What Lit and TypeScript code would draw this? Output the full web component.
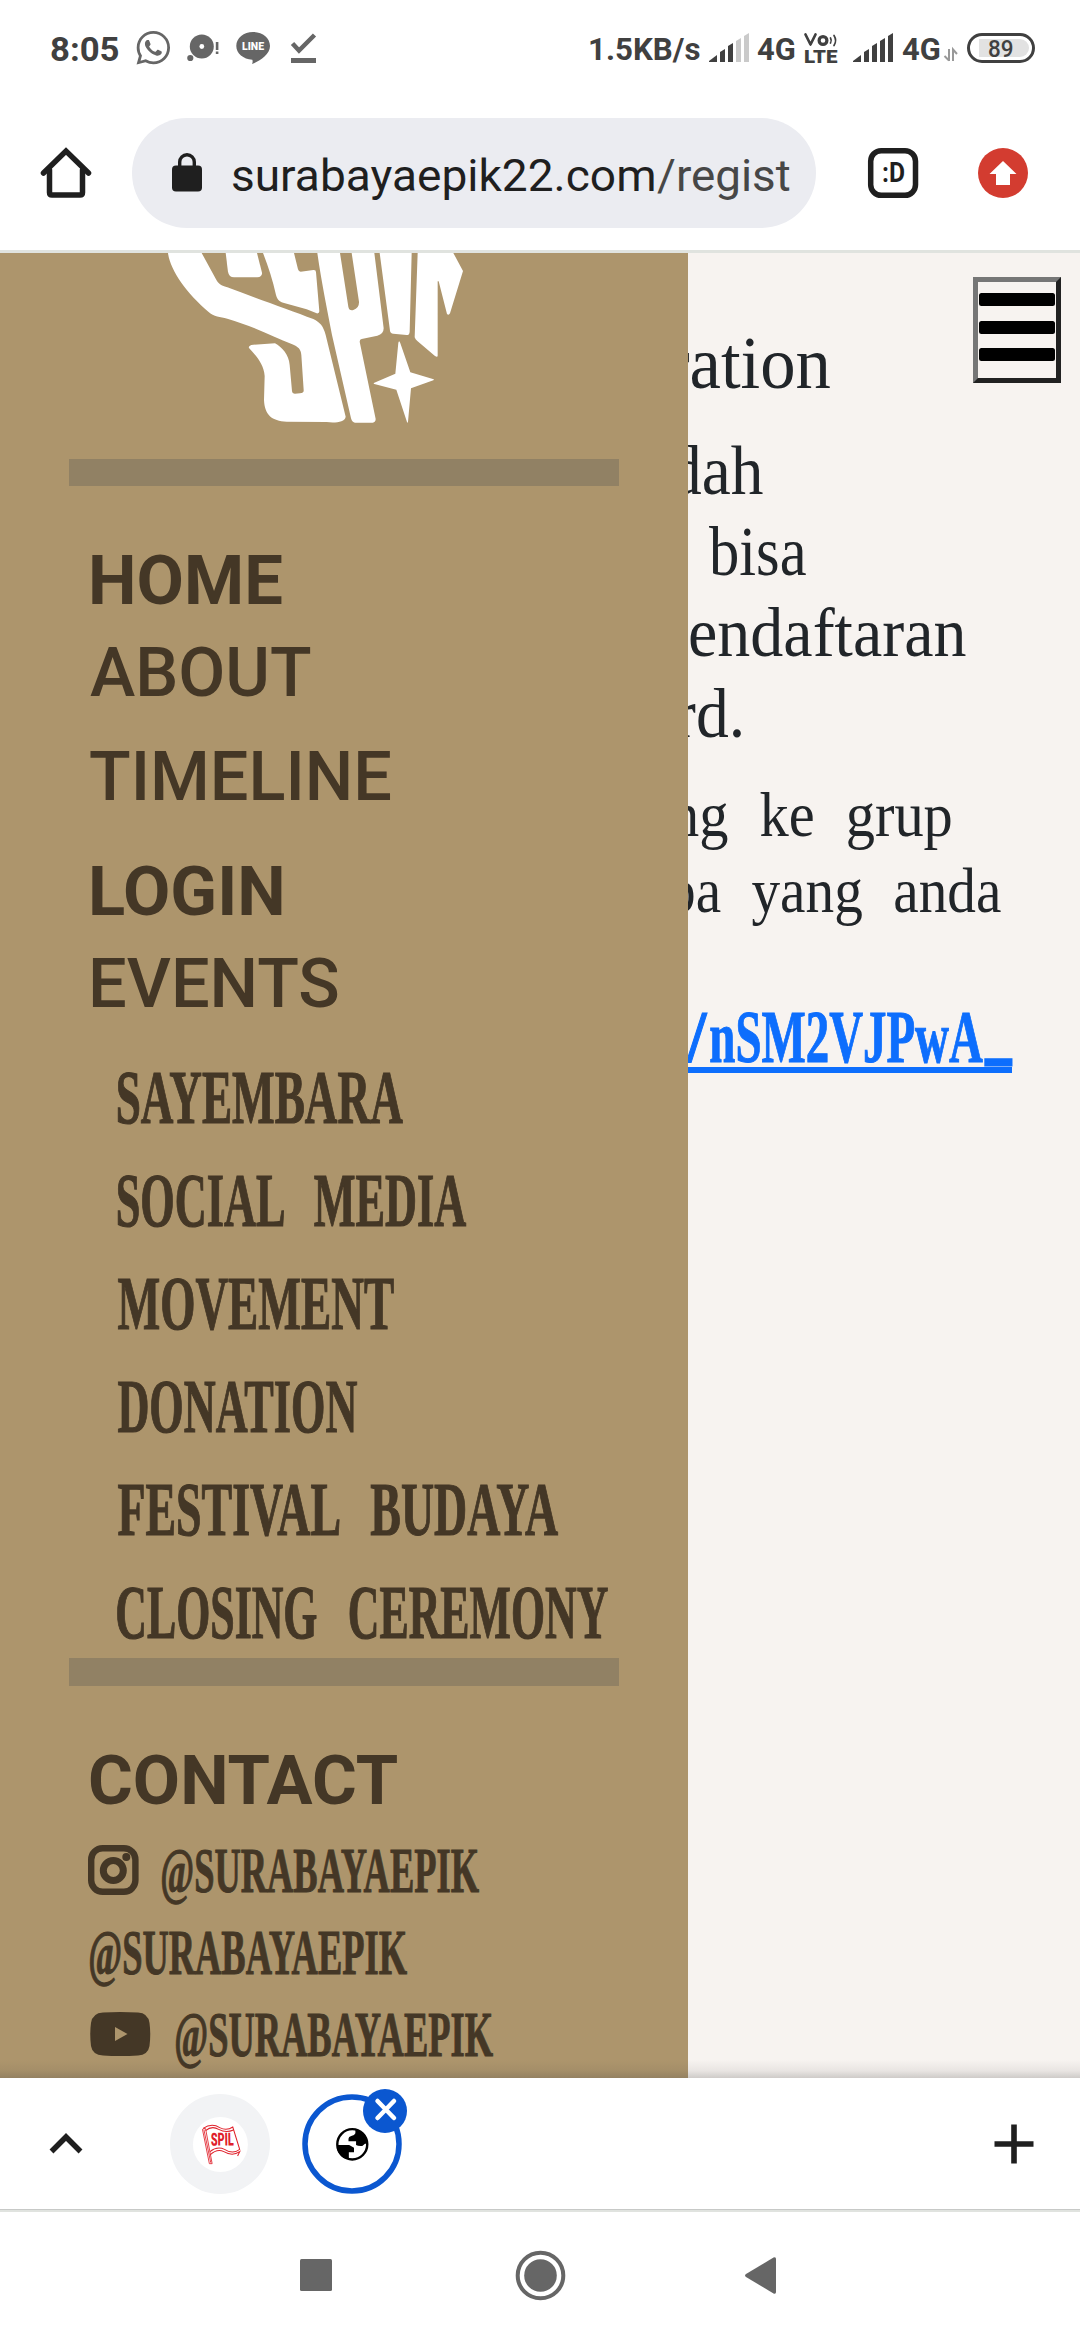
import { LitElement, html, css, svg } from "lit";
import { customElement, property, query } from "lit/decorators.js";
import { styleMap } from "lit/directives/style-map.js";

/** Single line of text whose inked width is stretched to a given number of pixels. */
@customElement("fit-text")
class FitText extends LitElement {
  @property() text = "";
  @property({ type: Number }) width = 0;
  @query("span") span!: HTMLSpanElement;

  static styles = css`
    :host {
      display: block;
      flex: none;
      white-space: nowrap;
    }
    span {
      display: inline-block;
      transform-origin: 0 50%;
      white-space: pre;
      vertical-align: top;
    }
  `;

  updated() {
    const cs = getComputedStyle(this);
    const ctx = document.createElement("canvas").getContext("2d") as any;
    ctx.font = `${cs.fontWeight} ${cs.fontSize} ${cs.fontFamily}`;
    ctx.wordSpacing = cs.wordSpacing;
    const m = ctx.measureText(this.text);
    const left = -m.actualBoundingBoxLeft;
    const scale = this.width / (m.actualBoundingBoxRight - left);
    this.style.width = `${this.width}px`;
    this.span.style.transform = `translateX(${-left * scale}px) scaleX(${scale})`;
  }

  render() {
    return html`<span>${this.text}</span>`;
  }
}

const signal = (x: number, lit: number) =>
  [55, 49, 43, 38, 33].map((top, i) => {
    const l = x + i * 8 - (i ? -3 : 0);
    const w = i ? 5 : 8;
    const drop = i ? 3 : 6;
    return svg`<path fill=${i < lit ? "#404040" : "#cacaca"}
      d="M${l} ${top + drop}L${l + w} ${top}V62H${l}Z"/>`;
  });

const sub: [string, number, number][] = [
  ["SAYEMBARA", 118, 285],
  ["SOCIAL MEDIA", 118, 351],
  ["MOVEMENT", 118, 276],
  ["DONATION", 118, 239],
  ["FESTIVAL BUDAYA", 118, 443],
  ["CLOSING CEREMONY", 117, 491],
];

const lines: [string, string, number, number][] = [
  ["title", "ration", 667, 163],
  ["big", "dah", 671, 92],
  ["big", "bisa", 709, 97],
  ["big", "endaftaran", 690, 276],
  ["big", "rd.", 675, 66],
  ["small first", "ng ke grup", 671, 280],
  ["small", "ba yang anda", 667, 334],
];

@customElement("app-root")
class AppRoot extends LitElement {
  static styles = css`
    :host {
      display: flex;
      flex-direction: column;
      width: 1080px;
      height: 2340px;
      overflow: hidden;
      background: #fff;
      font-family: Roboto, "Liberation Sans", sans-serif;
    }
    svg {
      display: block;
      flex: none;
    }
    .status {
      display: flex;
      height: 98px;
      padding-left: 51px;
      color: #404040;
      line-height: 98px;
      font-weight: 700;
      font-size: 32px;
    }
    .clock {
      font-size: 34px;
      margin-right: 11px;
    }
    .speed {
      margin-left: 270px;
    }
    .toolbar {
      display: flex;
      height: 152px;
      border-bottom: 3px solid #e0e3df;
    }
    .pill {
      display: flex;
      box-sizing: border-box;
      width: 684px;
      height: 110px;
      margin-top: 20px;
      border-radius: 55px;
      background: #ebecf1;
      font-size: 45px;
      line-height: 115px;
      color: #1f1f1f;
    }
    .path {
      margin-left: 3px;
      color: #474747;
    }
    .content {
      position: relative;
      display: flex;
      height: 1825px;
      background: #f7f3f0;
      overflow: hidden;
    }
    .content::after {
      content: "";
      position: absolute;
      left: 0;
      right: 0;
      bottom: 0;
      height: 18px;
      background: linear-gradient(rgba(60, 60, 60, 0), rgba(60, 60, 60, 0.08) 60%, rgba(60, 60, 60, 0.22));
    }
    .side {
      flex: none;
      width: 688px;
      height: 1825px;
      background: #ad956c;
      color: #443726;
      overflow: hidden;
    }
    .logo {
      margin-left: 140px;
    }
    .rule {
      width: 550px;
      height: 27px;
      margin: 34px 0 0 69px;
      background: #918164;
    }
    .rule.second {
      height: 28px;
      margin-top: -6px;
    }
    .item {
      margin-left: 92px;
      font-size: 69px;
      line-height: 92px;
      height: 92px;
      font-weight: 500;
    }
    .bold {
      font-weight: 700;
    }
    .gap49 {
      margin-top: 49px;
    }
    .gap12 {
      margin-top: 12px;
    }
    .gap23 {
      margin-top: 23px;
    }
    .wide {
      margin-left: 89.5px;
    }
    .sub {
      margin-top: 16px;
      font: 700 77px/103px "Liberation Serif", serif;
      word-spacing: 34px;
      -webkit-text-stroke: 1.2px #443726;
    }
    .handles {
      margin-top: 3px;
      font: 700 63px/82px "Liberation Serif", serif;
      -webkit-text-stroke: 1px #443726;
    }
    .row {
      display: flex;
      height: 82px;
    }
    .plain {
      padding-left: 90px;
    }
    .main {
      flex: 1;
      min-width: 0;
      padding-top: 70px;
      overflow: hidden;
      color: #212529;
      font-family: "Liberation Serif", serif;
    }
    .title {
      font-size: 74px;
      line-height: 80px;
      margin-bottom: 28px;
    }
    .big {
      font-size: 69px;
      line-height: 81px;
    }
    .small {
      font-size: 64px;
      line-height: 76px;
      word-spacing: 18px;
    }
    .first {
      margin-top: 22px;
    }
    .link {
      display: flex;
      box-sizing: border-box;
      height: 75px;
      width: 324px;
      margin-top: 69px;
      border-bottom: 6px solid #0d6efd;
      color: #0d6efd;
      font-weight: 700;
      font-size: 73px;
      line-height: 80px;
      -webkit-text-stroke: 1px #0d6efd;
    }
    .slash {
      margin-left: -2px;
    }
    .code {
      margin-left: 2px;
    }
    .under {
      margin: -7px 0 0 2px;
      -webkit-text-stroke-width: 3px;
    }
    .burger {
      position: absolute;
      top: 24px;
      left: 973px;
      display: flex;
      flex-direction: column;
      box-sizing: border-box;
      width: 88px;
      height: 106px;
      padding: 11px 1px 0;
      gap: 14.5px;
      border: 5px solid;
      border-color: #767676 #212121 #212121 #767676;
      z-index: 1;
    }
    .bar {
      height: 13px;
      border-radius: 2.5px;
      background: #000;
    }
    .tabs {
      height: 132px;
      border-bottom: 2px solid #e0e3df;
      box-shadow: inset 0 -1px #c7c9c7;
    }
  `;

  private item(text: string, width: number, cls: string) {
    return html`<fit-text class="item ${cls}" .text=${text} .width=${width}></fit-text>`;
  }

  render() {
    return html`
      <div class="status">
        <fit-text class="clock" .text=${"8:05"} .width=${68}></fit-text>
        <svg width="190" height="98" viewBox="130 0 190 98" fill="#666">
          <path transform="translate(136.5 31) scale(1.4)" d="M17.472 14.382c-.297-.149-1.758-.867-2.03-.967-.273-.099-.471-.148-.67.15-.197.297-.767.966-.94 1.164-.173.199-.347.223-.644.075-.297-.15-1.255-.463-2.39-1.475-.883-.788-1.48-1.761-1.653-2.059-.173-.297-.018-.458.13-.606.134-.133.298-.347.446-.52.149-.174.198-.298.298-.497.099-.198.05-.371-.025-.52-.075-.149-.669-1.612-.916-2.207-.242-.579-.487-.5-.669-.51-.173-.008-.371-.01-.57-.01-.198 0-.52.074-.792.372-.272.297-1.04 1.016-1.04 2.479 0 1.462 1.065 2.875 1.213 3.074.149.198 2.096 3.2 5.077 4.487.709.306 1.262.489 1.694.625.712.227 1.36.195 1.871.118.571-.085 1.758-.719 2.006-1.413.248-.694.248-1.289.173-1.413-.074-.124-.272-.198-.57-.347m-5.421 7.403h-.004a9.87 9.87 0 01-5.031-1.378l-.361-.214-3.741.982.998-3.648-.235-.374a9.86 9.86 0 01-1.51-5.26c.001-5.45 4.436-9.884 9.888-9.884 2.64 0 5.122 1.03 6.988 2.898a9.825 9.825 0 012.893 6.994c-.003 5.45-4.437 9.884-9.885 9.884m8.413-18.297A11.815 11.815 0 0012.05 0C5.495 0 .16 5.335.157 11.892c0 2.096.547 4.142 1.588 5.945L.057 24l6.305-1.654a11.882 11.882 0 005.683 1.448h.005c6.554 0 11.89-5.335 11.893-11.893a11.821 11.821 0 00-3.48-8.413z"/>
          <circle cx="201.8" cy="46.5" r="12"/>
          <circle cx="201.8" cy="46.5" r="2.4" fill="#fff"/>
          <circle cx="190.3" cy="58" r="3.1"/>
          <path d="M215.8 42h2.6v8h-2.6zM215.8 51.5h2.6v2.6h-2.6z"/>
          <path d="M253 32c9.500 0 17 6 17 14 0 4-2 7-5.500 10.500-3.500 3-8 6-12.500 7.500 .8-1.500 .8-3 .3-4.200-9-.6-16-6.500-16-13.800 0-8 7.500-14 16.700-14z"/>
          <text x="242" y="50" font-size="11" font-weight="900" fill="#fff" textLength="22" lengthAdjust="spacingAndGlyphs">LINE</text>
          <path d="M292.500 43.500l6.500 7 15.500-15.500" fill="none" stroke="#666" stroke-width="4.500"/>
          <path d="M291 58h25v5h-25z"/>
        </svg>
        <fit-text class="speed" .text=${"1.5KB/s"} .width=${110}></fit-text>
        <svg width="57" height="98" viewBox="700 0 57 98">${signal(709, 3)}</svg>
        <fit-text .text=${"4G"} .width=${38}></fit-text>
        <svg width="107" height="98" viewBox="795 0 107 98" fill="#404040">
          <g fill="none" stroke="#404040" stroke-width="2.700" stroke-linecap="round" stroke-linejoin="round">
            <path d="M805.500 34.500l5 10 5-10"/>
            <circle cx="823" cy="40.500" r="3.900" stroke-width="3.200"/>
            <path d="M830.500 38q1.500 2.500 0 5M834 35.500q3.200 5 0 10" stroke-width="1.700"/>
          </g>
          <text x="804" y="63" font-size="18" font-weight="900" textLength="33.500" lengthAdjust="spacingAndGlyphs">LTE</text>
          ${signal(853, 5)}
        </svg>
        <fit-text .text=${"4G"} .width=${38}></fit-text>
        <svg width="140" height="98" viewBox="940 0 140 98">
          <path d="M949 49v12M944.500 56l4.500 4.500M953 61V49.500l4 4.500" fill="none" stroke="#999" stroke-width="2"/>
          <rect x="968.500" y="34.500" width="65" height="27" rx="13.500" fill="none" stroke="#404040" stroke-width="3"/>
          <path d="M979 39h41a9 9 0 0 1 0 18h-41z" fill="#e2e2e2"/>
          <text x="988" y="56.500" font-size="23.500" font-weight="500" fill="#404040" textLength="25.500" lengthAdjust="spacingAndGlyphs">89</text>
        </svg>
      </div>

      <div class="toolbar">
        <svg width="132" height="152" viewBox="0 98 132 152" fill="none" stroke="#1f1f1f" stroke-width="5.500" stroke-linecap="round" stroke-linejoin="round">
          <path d="M43.500 173L66 151l22.500 22" stroke-linejoin="miter"/>
          <path d="M49.500 170v22.500q0 2.500 2.500 2.500h28q2.500 0 2.500-2.500V170"/>
        </svg>
        <div class="pill">
          <svg width="101" height="110" viewBox="132 118 101 110">
            <rect x="172" y="165.500" width="30" height="26" rx="4" fill="#1f1f1f"/>
            <path d="M179.700 167v-5a7.300 7.300 0 0 1 14.600 0v5" fill="none" stroke="#1f1f1f" stroke-width="3.400"/>
          </svg>
          <fit-text .text=${"surabayaepik22.com"} .width=${421}></fit-text>
          <fit-text class="path" .text=${"/regist"} .width=${133}></fit-text>
        </div>
        <svg width="264" height="152" viewBox="816 98 264 152">
          <rect x="870.700" y="150.700" width="44.800" height="44.600" rx="10.500" fill="none" stroke="#1f1f1f" stroke-width="5.500"/>
          <text x="882" y="181.500" font-size="27" font-weight="700" fill="#1f1f1f" textLength="23" lengthAdjust="spacingAndGlyphs">:D</text>
          <circle cx="1003" cy="173" r="25" fill="#d33c30"/>
          <path d="M1003 161l13.500 13h-6.500v11h-14v-11h-6.500z" fill="#fff"/>
        </svg>
      </div>

      <div class="content">
        <div class="side">
          <svg class="logo" width="360" height="172" viewBox="0 39 1080 516" fill="#fff">
            <path d="M84 39C90 90 140 160 205 215C222 230 240 230 262 236C330 255 400 290 455 312C475 320 483 328 484 345L491 450Q492 459 480 460L465 461Q457 461 456 453L449 375C447 345 425 320 405 310L340 314Q324 316 327 324C350 348 372 375 374 408L372 480C374 525 395 543 440 545L560 546C585 550 615 546 617 530L557 285C550 258 540 247 520 237C450 210 350 175 262 142C240 137 235 130 228 118L185 39Z"/>
            <path d="M257 39L264 95Q267 112 282 112L352 112Q367 110 366 98L351 39Z"/>
            <path d="M369 39C385 80 398 120 408 165C413 182 420 186 435 190L500 208L530 220Q538 221 538 214L528 97Q528 89 520 90L482 95Q476 95 474 88L462 39Z"/>
            <path d="M532 39C545 130 560 200 576 285L633 535Q637 548 645 548L698 548Q707 547 707 537L659 305Q659 298 665 297L712 287Q731 282 731 265L703 39H635L657 185Q658 205 640 210Q627 213 625 200L600 39Z"/>
            <path d="M719 39L750 272Q751 280 760 281L800 285Q808 286 809 275L815 39Z"/>
            <path d="M833 39L824 292Q826 298 832 303L884 347Q892 353 893 348V124H896L921 222Q926 227 930 220L969 93L940 39Z"/>
            <path d="M777 304Q779 304 781 310L811 397L881 418Q883 420 880 421L813 445L804 545Q802 552 800 543L769 449L703 432Q698 430 703 428L766 401L775 308Z"/>
          </svg>
          <div class="rule"></div>
          ${this.item("HOME", 190, "bold gap49")}
          ${this.item("ABOUT", 220.5, "wide")}
          ${this.item("TIMELINE", 301, "wide gap12")}
          ${this.item("LOGIN", 190, "bold gap23")}
          ${this.item("EVENTS", 246, "")}
          <div class="sub">
            ${sub.map(([t, x, w]) => html`<fit-text .text=${t} .width=${w} style=${styleMap({ marginLeft: `${x}px` })}></fit-text>`)}
          </div>
          <div class="rule second"></div>
          ${this.item("CONTACT", 307.5, "bold wide gap49")}
          <div class="handles">
            <div class="row">
              <svg width="162" height="82" viewBox="0 1830 162 82" fill="none" stroke="#443726">
                <rect x="91.200" y="1848.200" width="44.200" height="43.600" rx="11.500" stroke-width="6.400"/>
                <circle cx="113.300" cy="1870.500" r="10" stroke-width="7"/>
                <circle cx="126.300" cy="1857" r="4" fill="#443726" stroke="none"/>
              </svg>
              <fit-text .text=${"@SURABAYAEPIK"} .width=${317}></fit-text>
            </div>
            <div class="row plain">
              <fit-text .text=${"@SURABAYAEPIK"} .width=${317}></fit-text>
            </div>
            <div class="row">
              <svg width="176" height="82" viewBox="0 1994 176 82">
                <path d="M103 2012.500Q120 2011.500 138 2012.500Q148 2013 149.500 2023Q151 2034 149.500 2046Q148 2055 138 2055.500Q120 2056.500 103 2055.500Q92.500 2055 91 2046Q89.500 2034 91 2023Q92.500 2013 103 2012.500Z" fill="#443726"/>
                <path d="M115 2027v14l12.500-7z" fill="#ad956c"/>
              </svg>
              <fit-text .text=${"@SURABAYAEPIK"} .width=${317}></fit-text>
            </div>
          </div>
        </div>
        <div class="main">
          ${lines.map(([c, t, x, w]) => html`<fit-text class=${c} .text=${t} .width=${w} style=${styleMap({ marginLeft: `${x - 688}px` })}></fit-text>`)}
          <a class="link">
            <fit-text class="slash" .text=${"/"} .width=${22}></fit-text>
            <fit-text class="code" .text=${"nSM2VJPwA"} .width=${273}></fit-text>
            <fit-text class="under" .text=${"_"} .width=${27}></fit-text>
          </a>
        </div>
        <div class="burger">
          <div class="bar"></div>
          <div class="bar"></div>
          <div class="bar"></div>
        </div>
      </div>

      <div class="tabs">
        <svg width="1080" height="131" viewBox="0 2078 1080 131">
          <path d="M51.500 2151.500L66 2137l14.500 14.500" fill="none" stroke="#1f1f1f" stroke-width="5.500"/>
          <circle cx="220" cy="2144" r="50" fill="#f2f3f5"/>
          <circle cx="220.400" cy="2144.500" r="27.500" fill="#fff"/>
          <g transform="translate(0 2060) scale(.34436 .33333)" fill="none" stroke="#e0202a" stroke-width="3">
            <path d="M588 208L608 311H616L597 206Q590 203 588 208M592 208l20 100" stroke-width="2.500"/>
            <path d="M590 205Q615 188 638 203Q658 214 676 201L696 268Q676 284 652 268Q630 258 610 275"/>
            <path d="M597 212Q615 196 635 208Q656 220 678 210M610 285Q630 265 650 275Q675 290 696 275L690 288"/>
            <text x="613" y="257" font-size="54" font-weight="900" fill="#e0202a" stroke="none" textLength="66" lengthAdjust="spacingAndGlyphs" transform="rotate(-1 613 257)">SPIL</text>
          </g>
          <circle cx="352" cy="2144" r="47" fill="#fff" stroke="#0b57d0" stroke-width="5.500"/>
          <g transform="translate(0 2060) scale(.34436 .33333)">
            <ellipse cx="1023" cy="253" rx="43.500" ry="45.500" fill="#fff" stroke="#000" stroke-width="7"/>
            <path d="M978 255H1014L1028 263V277H1013V298Q980 294 978 255ZM1032 212V220Q1030 226 1020 228Q1012 230 1012 236V244H1034V255Q1040 259 1052 258L1060 251H1068Q1066 218 1032 208Z"/>
          </g>
          <circle cx="385" cy="2111" r="22" fill="#0b57d0"/>
          <path d="M377.500 2101l16.500 17M394 2101l-16.500 17" stroke="#fff" stroke-width="4.500" stroke-linecap="round"/>
          <path d="M994.500 2144h39M1014 2124.500v39" stroke="#1f1f1f" stroke-width="5.600"/>
        </svg>
      </div>
      <svg width="1080" height="128" viewBox="0 2212 1080 128" fill="#666">
        <rect x="300" y="2259" width="32" height="32" rx="1.500"/>
        <circle cx="540.500" cy="2275.500" r="22.800" fill="none" stroke="#666" stroke-width="4"/>
        <circle cx="540.500" cy="2275.500" r="16.300"/>
        <path d="M746 2274L773.500 2257.500Q776 2256.500 776 2259V2292Q776 2294.500 773.500 2293.500L746 2277Q744 2275.500 746 2274Z"/>
      </svg>
    `;
  }
}
